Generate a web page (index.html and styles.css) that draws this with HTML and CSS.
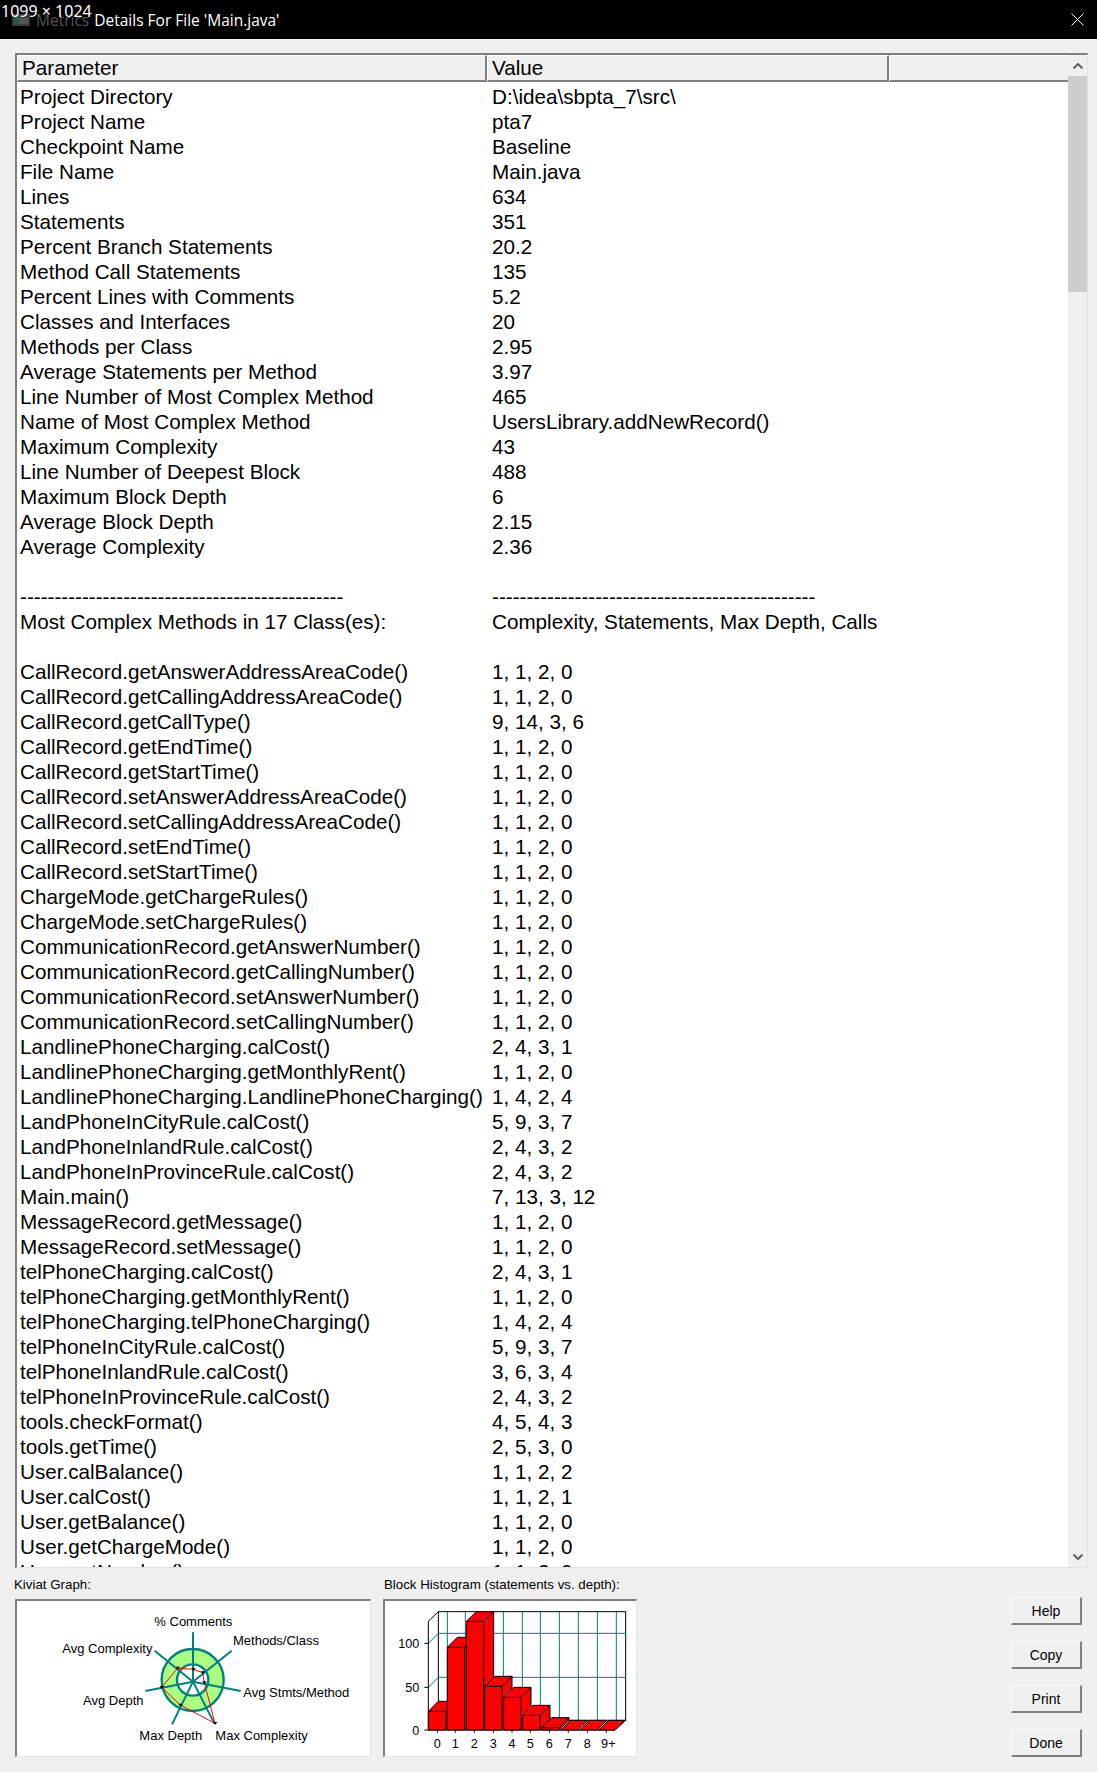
FILE: index.html
```html
<!DOCTYPE html>
<html lang="en">
<head>
    <meta charset="UTF-8">
    <title>Metrics Details For File 'Main.java'</title>
    <link rel="stylesheet" href="styles.css">
</head>
<body>

    <!-- Size label that lies over the title bar -->
    <div class="size-label">1099 × 1024</div>

    <!-- Title bar -->
    <header class="titlebar">
        <svg class="app-icon" width="18" height="12" viewBox="0 0 18 12">
            <rect width="18" height="12" fill="#3a3a3a"/>
            <rect x="2" y="2" width="6" height="8" fill="#2f5a48"/>
            <rect x="8" y="4" width="8" height="6" fill="#555"/>
        </svg>
        <span class="title-dim">Metrics</span>
        <span class="title-text">Details For File 'Main.java'</span>
        <svg class="close-icon" width="13" height="13" viewBox="0 0 13 13">
            <path d="M0.5 0.5L12.5 12.5M12.5 0.5L0.5 12.5" stroke="#fff" stroke-width="1" fill="none"/>
        </svg>
    </header>

    <!-- Parameter / value list -->
    <div class="list-box">
        <div class="list-main">
            <div class="list-head">
                <div class="head-cell head-param">Parameter</div>
                <div class="head-cell head-value">Value</div>
                <div class="head-cell head-rest"></div>
            </div>
            <div class="rows">
                <div class="row"><span>Project Directory</span><span>D:\idea\sbpta_7\src\</span></div>
                <div class="row"><span>Project Name</span><span>pta7</span></div>
                <div class="row"><span>Checkpoint Name</span><span>Baseline</span></div>
                <div class="row"><span>File Name</span><span>Main.java</span></div>
                <div class="row"><span>Lines</span><span>634</span></div>
                <div class="row"><span>Statements</span><span>351</span></div>
                <div class="row"><span>Percent Branch Statements</span><span>20.2</span></div>
                <div class="row"><span>Method Call Statements</span><span>135</span></div>
                <div class="row"><span>Percent Lines with Comments</span><span>5.2</span></div>
                <div class="row"><span>Classes and Interfaces</span><span>20</span></div>
                <div class="row"><span>Methods per Class</span><span>2.95</span></div>
                <div class="row"><span>Average Statements per Method</span><span>3.97</span></div>
                <div class="row"><span>Line Number of Most Complex Method</span><span>465</span></div>
                <div class="row"><span>Name of Most Complex Method</span><span>UsersLibrary.addNewRecord()</span></div>
                <div class="row"><span>Maximum Complexity</span><span>43</span></div>
                <div class="row"><span>Line Number of Deepest Block</span><span>488</span></div>
                <div class="row"><span>Maximum Block Depth</span><span>6</span></div>
                <div class="row"><span>Average Block Depth</span><span>2.15</span></div>
                <div class="row"><span>Average Complexity</span><span>2.36</span></div>
                <div class="row"></div>
                <div class="row"><span>-----------------------------------------------</span><span>-----------------------------------------------</span></div>
                <div class="row"><span>Most Complex Methods in 17 Class(es):</span><span>Complexity, Statements, Max Depth, Calls</span></div>
                <div class="row"></div>
                <div class="row"><span>CallRecord.getAnswerAddressAreaCode()</span><span>1, 1, 2, 0</span></div>
                <div class="row"><span>CallRecord.getCallingAddressAreaCode()</span><span>1, 1, 2, 0</span></div>
                <div class="row"><span>CallRecord.getCallType()</span><span>9, 14, 3, 6</span></div>
                <div class="row"><span>CallRecord.getEndTime()</span><span>1, 1, 2, 0</span></div>
                <div class="row"><span>CallRecord.getStartTime()</span><span>1, 1, 2, 0</span></div>
                <div class="row"><span>CallRecord.setAnswerAddressAreaCode()</span><span>1, 1, 2, 0</span></div>
                <div class="row"><span>CallRecord.setCallingAddressAreaCode()</span><span>1, 1, 2, 0</span></div>
                <div class="row"><span>CallRecord.setEndTime()</span><span>1, 1, 2, 0</span></div>
                <div class="row"><span>CallRecord.setStartTime()</span><span>1, 1, 2, 0</span></div>
                <div class="row"><span>ChargeMode.getChargeRules()</span><span>1, 1, 2, 0</span></div>
                <div class="row"><span>ChargeMode.setChargeRules()</span><span>1, 1, 2, 0</span></div>
                <div class="row"><span>CommunicationRecord.getAnswerNumber()</span><span>1, 1, 2, 0</span></div>
                <div class="row"><span>CommunicationRecord.getCallingNumber()</span><span>1, 1, 2, 0</span></div>
                <div class="row"><span>CommunicationRecord.setAnswerNumber()</span><span>1, 1, 2, 0</span></div>
                <div class="row"><span>CommunicationRecord.setCallingNumber()</span><span>1, 1, 2, 0</span></div>
                <div class="row"><span>LandlinePhoneCharging.calCost()</span><span>2, 4, 3, 1</span></div>
                <div class="row"><span>LandlinePhoneCharging.getMonthlyRent()</span><span>1, 1, 2, 0</span></div>
                <div class="row"><span>LandlinePhoneCharging.LandlinePhoneCharging()</span><span>1, 4, 2, 4</span></div>
                <div class="row"><span>LandPhoneInCityRule.calCost()</span><span>5, 9, 3, 7</span></div>
                <div class="row"><span>LandPhoneInlandRule.calCost()</span><span>2, 4, 3, 2</span></div>
                <div class="row"><span>LandPhoneInProvinceRule.calCost()</span><span>2, 4, 3, 2</span></div>
                <div class="row"><span>Main.main()</span><span>7, 13, 3, 12</span></div>
                <div class="row"><span>MessageRecord.getMessage()</span><span>1, 1, 2, 0</span></div>
                <div class="row"><span>MessageRecord.setMessage()</span><span>1, 1, 2, 0</span></div>
                <div class="row"><span>telPhoneCharging.calCost()</span><span>2, 4, 3, 1</span></div>
                <div class="row"><span>telPhoneCharging.getMonthlyRent()</span><span>1, 1, 2, 0</span></div>
                <div class="row"><span>telPhoneCharging.telPhoneCharging()</span><span>1, 4, 2, 4</span></div>
                <div class="row"><span>telPhoneInCityRule.calCost()</span><span>5, 9, 3, 7</span></div>
                <div class="row"><span>telPhoneInlandRule.calCost()</span><span>3, 6, 3, 4</span></div>
                <div class="row"><span>telPhoneInProvinceRule.calCost()</span><span>2, 4, 3, 2</span></div>
                <div class="row"><span>tools.checkFormat()</span><span>4, 5, 4, 3</span></div>
                <div class="row"><span>tools.getTime()</span><span>2, 5, 3, 0</span></div>
                <div class="row"><span>User.calBalance()</span><span>1, 1, 2, 2</span></div>
                <div class="row"><span>User.calCost()</span><span>1, 1, 2, 1</span></div>
                <div class="row"><span>User.getBalance()</span><span>1, 1, 2, 0</span></div>
                <div class="row"><span>User.getChargeMode()</span><span>1, 1, 2, 0</span></div>
                <div class="row"><span>User.getNumber()</span><span>1, 1, 2, 0</span></div>
            </div>
        </div>

        <!-- Scrollbar -->
        <div class="scrollbar">
            <div class="scroll-btn">
                <svg width="10" height="6" viewBox="0 0 10 6"><path d="M0.5 5.5L5 1L9.5 5.5" stroke="#606060" stroke-width="2" fill="none"/></svg>
            </div>
            <div class="scroll-track"><div class="scroll-thumb"></div></div>
            <div class="scroll-btn">
                <svg width="10" height="6" viewBox="0 0 10 6"><path d="M0.5 0.5L5 5L9.5 0.5" stroke="#606060" stroke-width="2" fill="none"/></svg>
            </div>
        </div>
    </div>

    <!-- Graphs and buttons -->
    <section class="bottom">
        <div class="graph graph-kiviat">
            <div class="graph-label">Kiviat Graph:</div>
            <div class="graph-box">
                <svg class="chart" width="352" height="154" viewBox="51 183 1056 462">
                    <circle cx="578" cy="420" r="93" fill="#aaff80" stroke="#008080" stroke-width="7"/>
                    <circle cx="578" cy="420" r="47" fill="#fff" stroke="#008080" stroke-width="7"/>
                    <g stroke="#008080" stroke-width="6" fill="none">
                        <path d="M579 425L579 277"/>
                        <path d="M579 425L695 332"/>
                        <path d="M579 425L722 453"/>
                        <path d="M579 425L643 550"/>
                        <path d="M579 425L516 553"/>
                        <path d="M579 425L436 453"/>
                        <path d="M579 425L464 332"/>
                    </g>
                    <polygon points="580,388 608,398 613,428 645,550 541,495 485,442 533,384" fill="none" stroke="#ff0000" stroke-width="3"/>
                    <g fill="#000">
                        <path d="M574 384H587L580 393Z"/>
                        <path d="M602 394H615L608 403Z"/>
                        <path d="M607 424H620L613 433Z"/>
                        <path d="M639 546H652L645 555Z"/>
                        <path d="M535 491H548L541 500Z"/>
                        <path d="M479 438H492L485 447Z"/>
                        <path d="M527 380H540L533 389Z"/>
                    </g>
                    <g class="chart-text" font-size="39">
                        <text x="463" y="258">% Comments</text>
                        <text x="699" y="315">Methods/Class</text>
                        <text x="187" y="339">Avg Complexity</text>
                        <text x="730" y="471">Avg Stmts/Method</text>
                        <text x="249" y="495">Avg Depth</text>
                        <text x="418" y="600">Max Depth</text>
                        <text x="646" y="600">Max Complexity</text>
                    </g>
                </svg>
            </div>
        </div>

        <div class="graph graph-hist">
            <div class="graph-label">Block Histogram (statements vs. depth):</div>
            <div class="graph-box">
                <svg class="chart" width="252" height="154" viewBox="30 123 756 462">
                    <!-- back walls -->
                    <rect x="190" y="155" width="562" height="326" fill="#fff" stroke="#000" stroke-width="3"/>
                    <g stroke="#008080" stroke-width="3" fill="none">
                        <path d="M217 155V481M271 155V481M328 155V481M385 155V481M442 155V481M496 155V481M553 155V481M610 155V481M667 155V481M724 155V481"/>
                        <path d="M190 220H752M190 352H752"/>
                        <path d="M160 250L190 220M160 382L190 352"/>
                    </g>
                    <g stroke="#000" stroke-width="3" fill="none">
                        <path d="M160 184L190 155M160 184V510M160 510L190 481"/>
                        <path d="M148 250H160M148 382H160M148 510H720L752 481"/>
                        <path d="M187 510V518M241 510V518M298 510V518M355 510V518M411 510V518M466 510V518M523 510V518M580 510V518M637 510V518M694 510V518"/>
                    </g>
                    <!-- bars: outline first, then the front edges -->
                    <g fill="#ff0000" stroke="#000" stroke-width="3">
                        <path d="M160 454L190 424H242V481L212 510H160Z"/>
                        <path d="M160 454H212V510M212 454L242 424"/>
                        <path d="M217 262L247 232H299V481L269 510H217Z"/>
                        <path d="M217 262H269V510M269 262L299 232"/>
                        <path d="M274 184L304 155H356V481L326 510H274Z"/>
                        <path d="M274 184H326V510M326 184L356 155"/>
                        <path d="M329 379L359 349H411V481L381 510H329Z"/>
                        <path d="M329 379H381V510M381 379L411 349"/>
                        <path d="M386 412L416 382H468V481L438 510H386Z"/>
                        <path d="M386 412H438V510M438 412L468 382"/>
                        <path d="M443 466L473 436H525V481L495 510H443Z"/>
                        <path d="M443 466H495V510M495 466L525 436"/>
                        <path d="M500 503L530 473H582V481L552 510H500Z"/>
                        <path d="M500 503H552V510M552 503L582 473"/>
                        <path d="M557 510L587 481H639L609 510Z"/>
                        <path d="M614 510L644 481H696L666 510Z"/>
                        <path d="M671 510L701 481H750L720 510Z"/>
                    </g>
                    <g class="chart-text" font-size="38">
                        <text x="133" y="264" text-anchor="end">100</text>
                        <text x="133" y="396" text-anchor="end">50</text>
                        <text x="133" y="524" text-anchor="end">0</text>
                        <text x="187" y="565" text-anchor="middle">0</text>
                        <text x="241" y="565" text-anchor="middle">1</text>
                        <text x="298" y="565" text-anchor="middle">2</text>
                        <text x="355" y="565" text-anchor="middle">3</text>
                        <text x="411" y="565" text-anchor="middle">4</text>
                        <text x="466" y="565" text-anchor="middle">5</text>
                        <text x="523" y="565" text-anchor="middle">6</text>
                        <text x="580" y="565" text-anchor="middle">7</text>
                        <text x="637" y="565" text-anchor="middle">8</text>
                        <text x="700" y="565" text-anchor="middle">9+</text>
                    </g>
                </svg>
            </div>
        </div>

        <div class="buttons">
            <button class="btn">Help</button>
            <button class="btn">Copy</button>
            <button class="btn">Print</button>
            <button class="btn">Done</button>
        </div>
    </section>

</body>
</html>
```

FILE: styles.css
```css
/* Reset */
* {
    margin: 0;
    padding: 0;
    box-sizing: border-box;
}

body {
    position: relative;
    width: 1097px;
    height: 1772px;
    overflow: hidden;
    background: #f0f0f0;
    font-family: "Liberation Sans", Arial, sans-serif;
    color: #000;
}

/* Title bar */
.titlebar {
    display: flex;
    align-items: center;
    height: 39px;
    padding: 0 13px 0 12px;
    background: #000;
    color: #fff;
}

.app-icon {
    margin-top: 1px;
}

.title-dim {
    margin-left: 6px;
    font-family: "Open Sans", sans-serif;
    font-size: 15.5px;
    color: #555;
}

.title-text {
    margin-left: 5px;
    font-family: "Open Sans", sans-serif;
    font-size: 15.5px;
}

.close-icon {
    margin-left: auto;
}

.size-label {
    position: absolute;
    top: 2px;
    left: 1px;
    font-family: "Noto Sans", sans-serif;
    font-size: 16px;
    line-height: 18px;
    color: #fff;
    z-index: 2;
}

/* List */
.list-box {
    display: flex;
    width: 1073px;
    height: 1515px;
    margin: 14px 0 0 15px;
    background: #fff;
    border-top: 2px solid #808080;
    border-left: 2px solid #808080;
    border-right: 1px solid #e3e3e3;
    border-bottom: 1px solid #e3e3e3;
    overflow: hidden;
}

.list-main {
    flex: 1;
    min-width: 0;
}

.list-head {
    display: flex;
    height: 27px;
}

.head-cell {
    height: 27px;
    padding-left: 4px;
    background: #f0f0f0;
    border-top: 1px solid #fff;
    border-left: 1px solid #fff;
    border-right: 2px solid #808080;
    border-bottom: 2px solid #808080;
    font-size: 20.67px;
    line-height: 24px;
}

.head-param {
    width: 470px;
}

.head-value {
    width: 402px;
}

.head-rest {
    flex: 1;
    border-right: none;
}

.rows {
    padding-top: 2px;
}

.row {
    display: grid;
    grid-template-columns: 472px 1fr;
    height: 25px;
    padding-left: 3px;
    font-size: 20.67px;
    line-height: 25px;
    white-space: nowrap;
}

/* Scrollbar */
.scrollbar {
    display: flex;
    flex-direction: column;
    width: 19px;
    background: #f0f0f0;
}

.scroll-btn {
    display: flex;
    align-items: center;
    justify-content: center;
    height: 21px;
}

.scroll-track {
    flex: 1;
}

.scroll-thumb {
    height: 216px;
    background: #cdcdcd;
}

/* Bottom part */
.bottom {
    display: flex;
    padding: 9px 15px 0 14px;
}

.graph-label {
    height: 22px;
    font-size: 13.3px;
    line-height: 16px;
}

.graph-box {
    background: #fff;
    border-top: 2px solid #808080;
    border-left: 2px solid #808080;
    border-right: 1px solid #e3e3e3;
    border-bottom: 1px solid #e3e3e3;
    height: 158px;
}

.graph-kiviat {
    width: 357px;
    padding-left: 1px;
    margin-right: 12px;
}

.graph-kiviat .graph-label {
    margin-left: -1px;
}

.graph-hist {
    width: 254px;
}

.graph-hist .graph-label {
    margin-left: 1px;
}

.chart {
    display: block;
}

.chart-text {
    font-family: "Liberation Sans", Arial, sans-serif;
    fill: #000;
}

/* Buttons */
.buttons {
    display: flex;
    flex-direction: column;
    gap: 16px;
    margin-left: auto;
    padding-top: 20px;
}

.btn {
    width: 71px;
    height: 28px;
    background: #f0f0f0;
    border-top: 1px solid #fff;
    border-left: 1px solid #fff;
    border-right: 2px solid #808080;
    border-bottom: 2px solid #808080;
    font-family: "Liberation Sans", Arial, sans-serif;
    font-size: 14px;
    color: #000;
}
```
